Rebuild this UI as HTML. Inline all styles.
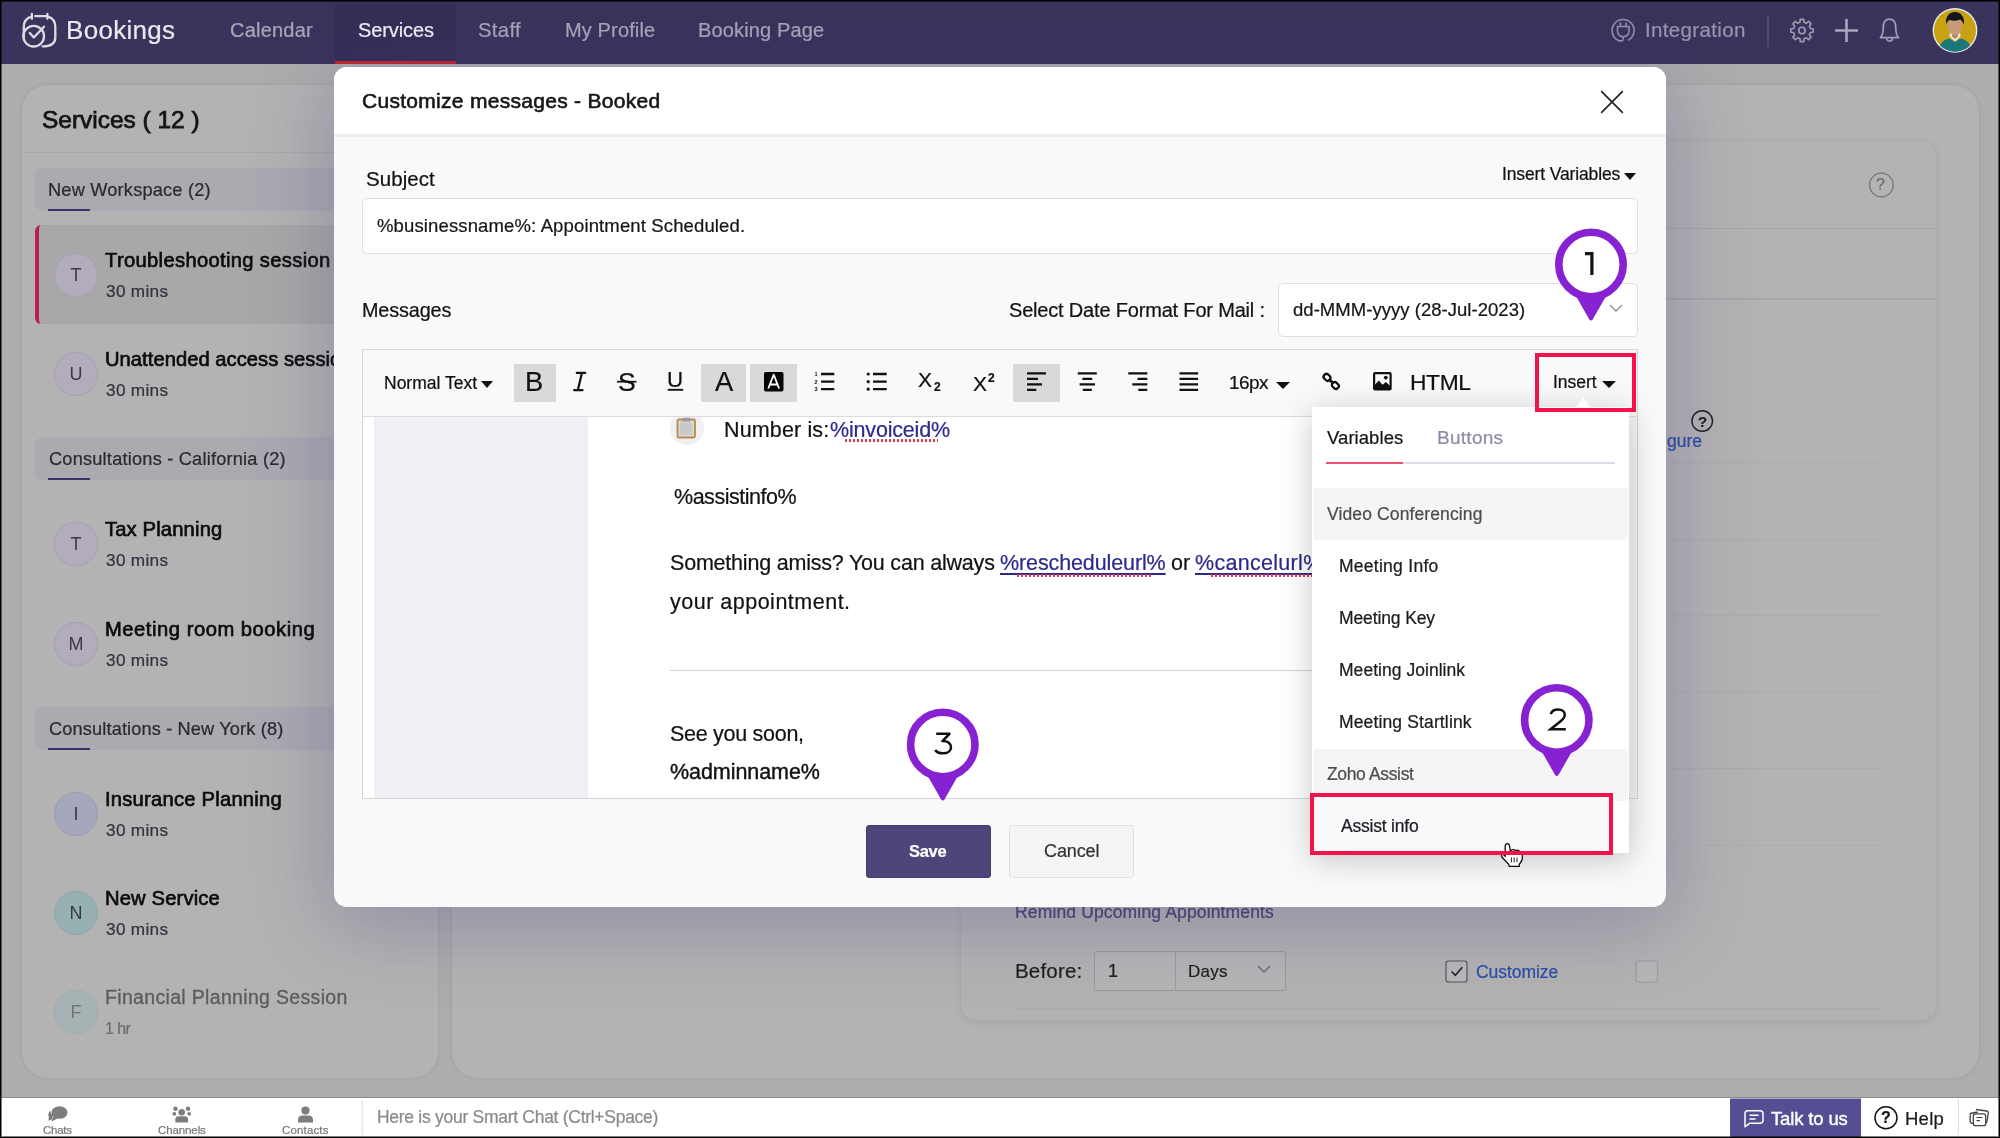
<!DOCTYPE html>
<html>
<head>
<meta charset="utf-8">
<title>Bookings</title>
<style>
*{box-sizing:border-box;margin:0;padding:0}
html,body{width:2000px;height:1138px;overflow:hidden}
body{font-family:"Liberation Sans",sans-serif;background:#adadad;position:relative;color:#111}
.abs{position:absolute}
.t{position:absolute;white-space:nowrap;line-height:1;will-change:transform;-webkit-text-stroke:0.22px}
/* header */
#hdr{position:absolute;left:0;top:0;width:2000px;height:63.500px;background:#3a335b}
#hdr .nav{color:#a9a6b8;font-size:20px}
#hdr .act{position:absolute;left:335px;top:0;width:121px;height:63.500px;background:#352e56;border-bottom:3.500px solid #c2262f}
/* page */
#side{position:absolute;left:22px;top:85px;width:416px;height:992.800px;background:#b3b3b3;border-radius:26px;box-shadow:0 0 4px rgba(0,0,0,.09)}
#main{position:absolute;left:451.500px;top:85px;width:1527px;height:992.800px;background:#b3b3b3;border-radius:26px;box-shadow:0 0 4px rgba(0,0,0,.09)}
#inner{position:absolute;left:960px;top:140px;width:976.500px;height:881px;background:#b3b3b3;border:1px solid #ababab;border-radius:16px;box-shadow:0 2px 6px rgba(0,0,0,.07)}
.grp{position:absolute;left:35px;width:420px;height:43px;background:#abaab1;border-radius:8px}
.grp i{position:absolute;left:13px;bottom:0;width:41.500px;height:1.600px;background:#38336a}
.gt{font-size:17.5px;color:#2a2a2e}
.av{will-change:transform;position:absolute;left:53.600px;width:44px;height:44px;border-radius:50%;background:#b3acbc;border:1px solid #a79fb3;text-align:center;line-height:42px;font-size:18px;color:#3a3a44}
.st{font-size:19.5px;letter-spacing:0.4px;font-weight:normal;-webkit-text-stroke:0.650px #0b0b0b;color:#0b0b0b}
.ss{font-size:16.5px;color:#30333f}

/* modal */
#modal{position:absolute;left:334px;top:67px;width:1332px;height:840px;background:#f8f9f9;border-radius:13px;box-shadow:0 14px 80px 6px rgba(72,52,125,.29)}
#mhead{position:absolute;left:0;top:0;width:1332px;height:70px;background:#fff;border-radius:13px 13px 0 0;border-bottom:3px solid #ededee}
.m20{font-size:20.5px;color:#121212}
.inp{position:absolute;background:#fff;border:1px solid #dedfe1;border-radius:5px}
#ed{position:absolute;left:362px;top:349px;width:1276px;height:450px;border:1px solid #d3d4d6;background:#fff}
#tb{position:absolute;left:0;top:0;width:1274px;height:67px;background:#f8f9f9;border-bottom:1px solid #dcdcde}
.hl{position:absolute;top:364px;height:38px;background:#d9d9d9}
.tbt{font-size:19px;color:#111}
.bd{font-size:21.5px;color:#121212}
.lk{color:#2b2a8c;text-decoration:underline;text-decoration-thickness:1.5px;text-underline-offset:3px}
.sq{position:absolute;height:3px;background-image:radial-gradient(circle,#e2344a 1.1px,transparent 1.4px);background-size:4px 3px}
#dd{position:absolute;left:1312px;top:407px;width:317px;height:446px;background:#fff;box-shadow:0 6px 30px rgba(0,0,0,.22)}
.ddh{position:absolute;left:2px;width:313.500px;height:52px;background:#f5f5f6}
.ddt{font-size:17.5px;color:#1b1b1f}
.ddg{font-size:17.5px;color:#4c4c50}
/* bottom bar */
#bot{position:absolute;left:0;top:1096.500px;width:2000px;height:42px;background:#fff;border-top:1.500px solid #8e8e8e}
/* frame */
#frame{position:absolute;left:0;top:0;width:2000px;height:1138px;border:1px solid #000;box-shadow:inset 0 0 0 1px rgba(0,0,0,.5);pointer-events:none;z-index:100}
</style>
</head>
<body>

<!-- ===== HEADER ===== -->
<div id="hdr">
  <div class="act"></div>
  <svg class="abs" style="left:0;top:0" width="2000" height="63" viewBox="0 0 2000 63" fill="none">
    <!-- logo -->
    <g stroke="#dcdae2" stroke-width="2.3" stroke-linecap="round" stroke-linejoin="round">
      <path d="M35.2 16.1H46.4M31.9 14v4.8M47.4 14v4.8"/>
      <path d="M31.6 16.6C26.3 18 23.8 21.5 23.8 27V37"/>
      <path d="M47.9 16.6C52.8 18 55.3 21.5 55.3 27V37.5C55.3 43.2 51 46.4 42.6 46.4"/>
      <circle cx="33.7" cy="36.2" r="10.3"/>
      <path d="M29.8 33l4 4.5L44 26.7"/>
    </g>
    <!-- integration -->
    <g stroke="#9591aa" stroke-width="1.6" stroke-linecap="round">
      <path d="M1628.6 40A11 11 0 1 0 1619 40.7"/>
      <path d="M1617.5 26.5h11.5v4.5a5.75 5.75 0 0 1-11.5 0zM1620.5 26v-3M1626 26v-3M1623.2 37v2.2c0 1.5-1.5 1.8-4 1.6"/>
    </g>
    <rect x="1767.3" y="15" width="1.4" height="32" fill="#5b5479"/>
    <!-- gear -->
    <g stroke="#9f9bb3" stroke-width="1.6" stroke-linejoin="round">
      <path d="M1810.36 28.49 L1813.16 28.73 L1813.16 32.27 L1810.36 32.51 L1809.33 34.99 L1811.14 37.14 L1808.64 39.64 L1806.49 37.83 L1804.01 38.86 L1803.77 41.66 L1800.23 41.66 L1799.99 38.86 L1797.51 37.83 L1795.36 39.64 L1792.86 37.14 L1794.67 34.99 L1793.64 32.51 L1790.84 32.27 L1790.84 28.73 L1793.64 28.49 L1794.67 26.01 L1792.86 23.86 L1795.36 21.36 L1797.51 23.17 L1799.99 22.14 L1800.23 19.34 L1803.77 19.34 L1804.01 22.14 L1806.49 23.17 L1808.64 21.36 L1811.14 23.86 L1809.33 26.01z"/>
      <circle cx="1802" cy="30.5" r="3.2"/>
    </g>
    <!-- plus -->
    <path d="M1835 30.5h23M1846.5 19v23" stroke="#aaa6bc" stroke-width="2.6"/>
    <!-- bell -->
    <g stroke="#a29eb6" stroke-width="1.7" stroke-linejoin="round">
      <path d="M1880.4 37.6c2.6-2.4 2.8-5 2.8-9.6 0-5.4 2.4-8.8 6.3-8.8s6.3 3.4 6.3 8.8c0 4.600 0.200 7.200 2.800 9.600z"/>
      <path d="M1886.600 38.200a2.900 2.900 0 0 0 5.800 0"/>
    </g>
    <!-- avatar -->
    <defs><clipPath id="avc"><circle cx="1955" cy="30.400" r="21.300"/></clipPath></defs>
    <circle cx="1955" cy="30.400" r="22.400" fill="#e9e6f2"/>
    <circle cx="1955" cy="30.400" r="21" fill="#c7a312"/>
    <g clip-path="url(#avc)">
      <path d="M1938.500 53c0-9 5-13.500 11-14.500l5.500 3.500 5.500-3.500c6 1 11 5.500 11 14.500z" fill="#1c777d"/>
      <path d="M1949.500 36.500l5.500 5 5.500-5v-3h-11z" fill="#e8e8e8"/>
      <path d="M1952 31h6v5.500l-3 2.500-3-2.500z" fill="#b88a64"/>
      <ellipse cx="1955" cy="26" rx="7.400" ry="9" fill="#c79c78"/>
      <path d="M1946.300 24.500c-1.500-7 2.500-12.500 8.700-12.500s10.200 5.500 8.700 12.500c-1-2.500-2.200-4-3.700-5-3 1.500-7 1.500-10.500 0.500-1.700 1-2.700 2.500-3.200 4.500z" fill="#15151a"/>
    </g>
  </svg>
  <div class="t" style="letter-spacing:0.292px;;;;;;;left:66.00px;top:17px;font-size:26px;color:#e9e7ef">Bookings</div>
  <div class="t nav" style="letter-spacing:0.214px;;;;;;;left:230.00px;top:20px">Calendar</div>
  <div class="t nav" style="letter-spacing:-0.098px;;;;;;;left:358.00px;top:20px;color:#f2f0f6">Services</div>
  <div class="t nav" style="letter-spacing:0.323px;;;;;;;font-size:20.3px;left:478.00px;top:19.75px">Staff</div>
  <div class="t nav" style="letter-spacing:0.135px;;;;;;;left:565.00px;top:20px">My Profile</div>
  <div class="t nav" style="letter-spacing:0.144px;;;;;;;left:698.00px;top:20px">Booking Page</div>
  <div class="t" style="letter-spacing:0.353px;;;;;;;left:1644.50px;top:20px;font-size:20.5px;color:#9995ad">Integration</div>
</div>

<!-- ===== PAGE BEHIND ===== -->
<div id="side"></div>
<div class="t" style="letter-spacing:-0.020px;;;;;;;left:41.50px;top:108.32px;font-size:24.5px;font-weight:normal;-webkit-text-stroke:0.750px #141414;color:#141414">Services ( 12 )</div>
<div class="abs" style="left:22px;top:152px;width:416px;height:1px;background:#a9a9a9"></div>

<div class="grp" style="top:168px"><i></i></div>
<div class="t gt" style="letter-spacing:0.200px;;;;;;;font-size:18.2px;left:47.50px;top:181.21px">New Workspace (2)</div>
<div class="abs" style="left:35px;top:225px;width:420px;height:99px;background:#a8a8a8;border-left:4.500px solid #b5244f;border-radius:6px 0 0 6px"></div>
<div class="av" style="top:253.20px">T</div>
<div class="t st" style="letter-spacing:0.325px;;;font-size:20.2px;;;;left:105.00px;top:250.01px">Troubleshooting session</div>
<div class="t ss" style="letter-spacing:0.319px;;;;;;;font-size:17.2px;left:105.50px;top:282.51px">30 mins</div>
<div class="av" style="top:352.20px">U</div>
<div class="t st" style="letter-spacing:0.03px;font-size:20.2px;left:104.5px;top:349.01px">Unattended access session</div>
<div class="t ss" style="letter-spacing:0.319px;;;;;;;font-size:17.2px;left:105.50px;top:381.51px">30 mins</div>

<div class="grp" style="top:437px"><i></i></div>
<div class="t gt" style="letter-spacing:0.210px;;;;;;;font-size:18.2px;left:48.50px;top:450.21px">Consultations - California (2)</div>
<div class="av" style="top:522.20px">T</div>
<div class="t st" style="letter-spacing:0.149px;;;font-size:20.2px;;;;left:105.00px;top:519.01px">Tax Planning</div>
<div class="t ss" style="letter-spacing:0.319px;;;;;;;font-size:17.2px;left:105.50px;top:551.51px">30 mins</div>
<div class="av" style="top:622.20px">M</div>
<div class="t st" style="letter-spacing:0.525px;;;font-size:20.2px;;;;left:104.50px;top:619.01px">Meeting room booking</div>
<div class="t ss" style="letter-spacing:0.319px;;;;;;;font-size:17.2px;left:105.50px;top:651.51px">30 mins</div>

<div class="grp" style="top:707px"><i></i></div>
<div class="t gt" style="letter-spacing:0.139px;;;;;;;font-size:18.2px;left:48.50px;top:720.21px">Consultations - New York (8)</div>
<div class="av" style="top:792.20px;background:#a5a7bc;border-color:#9899b1">I</div>
<div class="t st" style="letter-spacing:0.229px;;;font-size:20.2px;;;;left:104.50px;top:789.01px">Insurance Planning</div>
<div class="t ss" style="letter-spacing:0.319px;;;;;;;font-size:17.2px;left:105.50px;top:821.51px">30 mins</div>
<div class="av" style="top:891.20px;background:#97b0b2;border-color:#8aa6a9">N</div>
<div class="t st" style="letter-spacing:0.142px;;;font-size:20.2px;;;;left:104.50px;top:888.01px">New Service</div>
<div class="t ss" style="letter-spacing:0.319px;;;;;;;font-size:17.2px;left:105.50px;top:920.51px">30 mins</div>
<div class="av" style="top:990.20px;background:#a6b2b4;border-color:#9eadb0;color:#6f757b">F</div>
<div class="t st" style="letter-spacing:0.328px;;;;;;;left:104.50px;top:987.60px;font-weight:normal;color:#5c5c60;-webkit-text-stroke:0.300px #5c5c60">Financial Planning Session</div>
<div class="t ss" style="letter-spacing:-0.581px;;;;;;;font-size:16px;left:104.50px;top:1020.52px;color:#696b70">1 hr</div>
<div id="main"></div>
<div id="inner"></div>
<!-- behind-modal right content -->
<svg class="abs" style="left:0;top:0" width="2000" height="1138" viewBox="0 0 2000 1138" fill="none">
  <path d="M961 228.500H1936" stroke="#a7a7a9" stroke-width="1"/>
  <path d="M961 298.800H1936" stroke="#9f9fa3" stroke-width="1.200"/>
  <path d="M1015 462.500H1880M1015 539.500H1880M1015 615.800H1880M1015 692H1880M1015 768.500H1880M1015 845H1880M1015 1008.800H1880" stroke="#acacae" stroke-width="1"/>
  <circle cx="1881.400" cy="185" r="11.800" stroke="#757578" stroke-width="1.300"/>
  <circle cx="1702.200" cy="421" r="10.300" stroke="#1d1d22" stroke-width="1.400"/>
  <!-- checkbox -->
  <rect x="1446" y="961" width="21" height="21" rx="2.500" stroke="#55565c" stroke-width="1.200" fill="#b9b9b9"/>
  <path d="M1451.500 971.500l3.800 3.800 7-8" stroke="#222" stroke-width="1.600"/>
  <rect x="1636" y="961" width="21.500" height="21" rx="2.500" stroke="#9c9ca0" stroke-width="1.200" fill="#b7b7b7"/>
</svg>
<div class="t" style="left:1876.400px;top:176.500px;font-size:16px;color:#6f6f73">?</div>
<div class="t" style="left:1697.700px;top:413.500px;font-size:15px;font-weight:bold;color:#1d1d22">?</div>
<div class="t" style="left:1667.300px;top:433px;font-size:17.500px;color:#2a4ea6">gure</div>
<div class="t" id="rm" style="letter-spacing:0.146px;;;;;;;left:1014.50px;top:903.50px;font-size:17.500px;color:#48446f">Remind Upcoming Appointments</div>
<div class="t" id="bf" style="letter-spacing:0.184px;;;;;;;left:1014.50px;top:960.58px;font-size:20.5px;color:#1e1e1e">Before:</div>
<div class="abs" style="left:1093.500px;top:951px;width:192px;height:40px;background:#b5b5b5;border:1px solid #9b9b9e;border-radius:3px"></div>
<div class="abs" style="left:1175px;top:951px;width:1px;height:40px;background:#9b9b9e"></div>
<div class="t" style="left:1108px;top:962px;font-size:18px;color:#1e1e1e">1</div>
<div class="t" id="dy" style="letter-spacing:0.256px;;;;;;;left:1188.00px;top:963.42px;font-size:17px;color:#1e1e1e">Days</div>
<svg class="abs" style="left:1255px;top:963px" width="18" height="12" viewBox="0 0 18 12"><path d="M3 3l6 6 6-6" stroke="#6a6a70" stroke-width="1.300" fill="none"/></svg>
<div class="t" id="cz" style="letter-spacing:-0.054px;;;;;;;left:1475.50px;top:963.92px;font-size:17.5px;color:#2a4ea6">Customize</div>


<!-- ===== MODAL ===== -->
<div id="modal"><div id="mhead"></div></div>
<div class="t" style="letter-spacing:0.290px;;;;;;;left:361.50px;top:90.43px;font-size:21px;font-weight:normal;-webkit-text-stroke:0.600px #161616;color:#161616">Customize messages - Booked</div>
<svg class="abs" style="left:1599px;top:88.500px" width="26" height="26" viewBox="0 0 26 26"><path d="M2.200 2.200l21.600 21.600M23.800 2.200l-21.600 21.600" stroke="#222" stroke-width="1.700" fill="none"/></svg>

<div class="t m20" style="letter-spacing:0.053px;;;;;;;left:366.00px;top:168.50px">Subject</div>
<div class="t" style="letter-spacing:-0.136px;;;;;;;left:1501.50px;top:166.00px;font-size:17.5px;color:#111">Insert Variables</div>
<div class="abs" style="left:1624px;top:173px;border-left:6.500px solid transparent;border-right:6.500px solid transparent;border-top:7px solid #111"></div>
<div class="inp" style="left:362px;top:197.500px;width:1276px;height:56px"></div>
<div class="t" style="letter-spacing:0.137px;;;;;;;left:377.00px;top:217.20px;font-size:18.500px;color:#161616">%businessname%: Appointment Scheduled.</div>

<div class="t m20" style="letter-spacing:-0.109px;;;;;;;font-size:19.8px;left:361.50px;top:300.59px">Messages</div>
<div class="t m20" style="letter-spacing:-0.183px;;;;;;;font-size:20px;left:1008.50px;top:299.92px">Select Date Format For Mail :</div>
<div class="inp" style="left:1278px;top:282.500px;width:360px;height:54.500px"></div>
<div class="t" style="letter-spacing:0.036px;;;;;;;left:1293.00px;top:301.00px;font-size:18.500px;color:#161616">dd-MMM-yyyy (28-Jul-2023)</div>
<svg class="abs" style="left:1608px;top:303px" width="16" height="10" viewBox="0 0 16 10"><path d="M2 2l6 6 6-6" stroke="#8c8c90" stroke-width="1.300" fill="none"/></svg>

<div id="ed"><div id="tb"></div>
  <div class="abs" style="left:11px;top:67px;width:214px;height:381px;background:#f0eff3"></div>
  <div class="abs" style="left:1265px;top:67px;width:9px;height:381px;background:#f6f6f7;border-left:1px solid #e9e9eb"></div>
</div>

<!-- toolbar -->
<div class="hl" style="left:513.500px;width:42.500px"></div>
<div class="hl" style="left:701px;width:45px"></div>
<div class="hl" style="left:750px;width:47px"></div>
<div class="hl" style="left:1013px;width:47px"></div>
<div class="t" id="tNT" style="letter-spacing:0.001px;;;;;;;left:383.50px;top:375.30px;font-size:17.500px;color:#111">Normal Text</div>
<div class="abs" style="left:481px;top:381px;border-left:6.500px solid transparent;border-right:6.500px solid transparent;border-top:7px solid #111"></div>
<div class="t" id="tB" style="left:524.700px;top:368.100px;font-size:27.300px;color:#111">B</div>
<div class="t" id="tS" style="left:617.800px;top:368.500px;font-size:26.500px;color:#111">S</div>
<div class="t" id="tU" style="left:667.200px;top:368.600px;font-size:22.300px;color:#111">U</div>
<div class="t" id="tA" style="left:715.200px;top:368.200px;font-size:27.300px;color:#111">A</div>
<div class="t" id="tX1" style="left:918px;top:369px;font-size:21px;color:#111">X</div>
<div class="t" id="t21" style="left:934px;top:381px;font-size:12px;color:#111;font-weight:bold">2</div>
<div class="t" id="tX2" style="left:973px;top:372.500px;font-size:21px;color:#111">X</div>
<div class="t" id="t22" style="left:988px;top:371.500px;font-size:12px;color:#111;font-weight:bold">2</div>
<div class="t" id="t16" style="letter-spacing:-0.567px;;;;;;;left:1229.00px;top:372.85px;font-size:19px;color:#111">16px</div>
<div class="abs" style="left:1275.500px;top:382px;border-left:7px solid transparent;border-right:7px solid transparent;border-top:7.500px solid #111"></div>
<div class="t" id="tH" style="letter-spacing:-0.359px;;;;;;;left:1409.70px;top:371.24px;font-size:22.8px;color:#111">HTML</div>
<div class="t" id="tIns" style="letter-spacing:-0.041px;;;;;;;left:1553.30px;top:374.00px;font-size:17.500px;color:#111">Insert</div>
<div class="abs" style="left:1602px;top:380.500px;border-left:7px solid transparent;border-right:7px solid transparent;border-top:7px solid #111"></div>
<svg class="abs" style="left:560px;top:360px" width="1000" height="44" viewBox="560 360 1000 44" fill="none" stroke="#111" stroke-width="2.300">
  <!-- italic I -->
  <path d="M581.900 372.900L577.800 390.200M576.800 372.900h8.400M574.200 390.200h8.300" stroke-width="2.200" stroke-linecap="round"/>
  <!-- strike -->
  <path d="M617 381.700h19.500" stroke-width="1.700"/>
  <!-- underline -->
  <path d="M667.800 389.800h15.400" stroke-width="1.900"/>
  <!-- inverse A -->
  <rect x="764" y="372" width="19.500" height="19.500" rx="1.800" fill="#050505" stroke="none"/>
  <path d="M768.300 388.500l5.400-13.800 5.400 13.800M770 384.500h7.400" stroke="#fff" stroke-width="1.800" stroke-linejoin="round"/>
  <!-- ol -->
  <path d="M821 374h13.300M821 381.700h13.300M821 389.200h13.300"/>
  <g stroke="none" fill="#111" font-family="Liberation Sans, sans-serif" font-size="5.500" font-weight="bold"><text x="814.500" y="376">1</text><text x="814.500" y="383.700">2</text><text x="814.500" y="391.200">3</text></g>
  <!-- ul -->
  <path d="M873 374h13.700M873 381.700h13.700M873 389.200h13.700"/>
  <g stroke="none" fill="#111"><circle cx="868.200" cy="374" r="1.600"/><circle cx="868.200" cy="381.700" r="1.600"/><circle cx="868.200" cy="389.200" r="1.600"/></g>
  <!-- align left -->
  <path d="M1027 373.300h19M1027 378.800h11M1027 384.300h15M1027 389.800h9.300"/>
  <!-- align center -->
  <path d="M1077.800 373.300h19M1082.400 378.800h9.800M1079.600 384.300h15.400M1082.800 389.800h9"/>
  <!-- align right -->
  <path d="M1128.300 373.300h19M1137.500 378.800h9.800M1132.300 384.300h15M1138.300 389.800h9"/>
  <!-- justify -->
  <path d="M1179.500 373.300h18.600M1179.500 378.800h18.600M1179.500 384.300h18.600M1179.500 389.800h18.600"/>
  <!-- link -->
  <g stroke-width="2.300" transform="translate(1331.200 381.400) rotate(44.500)">
    <rect x="-9.300" y="-2.750" width="6.900" height="5.500" rx="2.100"/>
    <rect x="2.400" y="-2.750" width="6.900" height="5.500" rx="2.100"/>
    <path d="M-3 0H3" stroke-width="3"/>
  </g>
  <!-- image -->
  <rect x="1374.100" y="373.100" width="16.500" height="16.300" rx="1" stroke-width="2.200"/>
  <path d="M1374.300 390V385.500L1378.700 380.400L1382.600 384.800L1385.800 382.100L1390.400 386.300V390z" fill="#111" stroke="none"/>
  <circle cx="1385.800" cy="377.600" r="1.900" fill="#111" stroke="none"/>
</svg>

<!-- editor body -->
<div class="abs" style="left:669.500px;top:417px;width:34px;height:28px;overflow:hidden"><div class="abs" style="left:0;top:-6.500px;width:34px;height:34px;border-radius:50%;background:#f0eff4"></div></div>
<svg class="abs" style="left:676px;top:417px" width="21" height="22" viewBox="0 0 21 22"><rect x="1.500" y="2.500" width="17.500" height="18" rx="1.500" fill="#d9d9d6" stroke="#b98a4e" stroke-width="1.800"/><rect x="4" y="5.500" width="12.500" height="12.500" fill="#c9c9c9"/><rect x="6" y="0.800" width="8.500" height="3.600" rx="1" fill="#9a9a9a"/></svg>
<div class="t bd" id="b1" style="letter-spacing:0.137px;;;;;;left:724.40px;top:419.500px">Number is:</div>
<div class="t bd" id="b1b" style="letter-spacing:-0.178px;;;;;;left:830.20px;top:419.500px;color:#2d2a8f">%invoiceid%</div>
<div class="sq" style="left:844px;top:439px;width:94px"></div>
<div class="t bd" id="b2" style="letter-spacing:-0.476px;;;;;;;left:674.30px;top:486.50px">%assistinfo%</div>
<div class="t bd" id="b3" style="letter-spacing:-0.206px;;;;;;left:669.90px;top:553px">Something amiss? You can always</div>
<div class="t bd lk" id="b3a" style="letter-spacing:-0.114px;;;;;;left:1000.00px;top:553px">%rescheduleurl%</div>
<div class="t bd" id="b3o" style="letter-spacing:-0.057px;;;;;;left:1170.80px;top:553px">or</div>
<div class="abs" style="left:1190px;top:540px;width:122px;height:44px;overflow:hidden"><div class="t bd lk" id="b3b" style="left:4.500px;top:13px;letter-spacing:0.300px">%cancelurl% fo</div></div>
<div class="sq" style="left:1016px;top:574px;width:136px"></div>
<div class="sq" style="left:1210px;top:574px;width:102px"></div>
<div class="t bd" id="b4" style="letter-spacing:0.498px;;;;;;;left:669.90px;top:592.00px">your appointment.</div>
<div class="abs" style="left:669.500px;top:669.500px;width:643px;height:1.500px;background:#d2d2d4"></div>
<div class="t bd" id="b5" style="letter-spacing:-0.282px;;;;;;;left:669.90px;top:724.00px">See you soon,</div>
<div class="t bd" id="b6" style="letter-spacing:-0.066px;;;;;;;left:669.90px;top:762.00px;-webkit-text-stroke:0.400px #111">%adminname%</div>

<!-- buttons -->
<div class="abs" style="left:866px;top:825px;width:125px;height:52.500px;background:#4e467b;border-radius:3px;border:1px solid #443c72"></div>
<div class="t" id="bS" style="letter-spacing:-0.286px;;;;;;;left:909.40px;top:843.35px;font-size:16.5px;font-weight:bold;color:#fff">Save</div>
<div class="abs" style="left:1009px;top:825px;width:125px;height:52.500px;background:#f5f5f5;border-radius:3px;border:1px solid #e1e1e3"></div>
<div class="t" id="bC" style="letter-spacing:-0.106px;;;;;;;left:1044.40px;top:842px;font-size:18px;color:#333">Cancel</div>

<!-- dropdown -->
<div id="dd">
  <div class="ddh" style="top:81px"></div>
  <div class="ddh" style="top:341.500px"></div>
  <div class="abs" style="left:0;top:391px;width:301px;height:56px;background:#f8f9fa"></div>
  <div class="abs" style="left:14px;top:55.200px;width:288.500px;height:1.600px;background:#dddce8"></div>
  <div class="abs" style="left:14px;top:55.200px;width:76.500px;height:1.600px;background:#f0506f"></div>
</div>
<div class="abs" style="left:1576px;top:397px;border-left:7.500px solid transparent;border-right:7.500px solid transparent;border-bottom:10px solid #fbfcfc"></div>
<div class="t" id="d0" style="letter-spacing:0.062px;;;;;;;left:1326.50px;top:429px;font-size:18.500px;color:#15151a">Variables</div>
<div class="t" id="d0b" style="letter-spacing:0.278px;;;;;;;left:1436.90px;top:427.78px;font-size:19px;color:#8d8ba6">Buttons</div>
<div class="t ddg" id="d1" style="letter-spacing:0.120px;;;;;;;left:1326.50px;top:505.500px">Video Conferencing</div>
<div class="t ddt" id="d2" style="letter-spacing:0.266px;;;;;;;left:1339.20px;top:557.500px">Meeting Info</div>
<div class="t ddt" id="d3" style="letter-spacing:-0.123px;;;;;;;left:1339.20px;top:609.500px">Meeting Key</div>
<div class="t ddt" id="d4" style="letter-spacing:0.038px;;;;;;;left:1339.20px;top:661.500px">Meeting Joinlink</div>
<div class="t ddt" id="d5" style="letter-spacing:0.138px;;;;;;;left:1339.20px;top:713.500px">Meeting Startlink</div>
<div class="t ddg" id="d6" style="letter-spacing:-0.356px;;;;;;;left:1326.50px;top:765.500px">Zoho Assist</div>
<div class="t ddt" id="d7" style="letter-spacing:-0.202px;;;;;;;left:1340.60px;top:817.500px">Assist info</div>

<!-- cursor (under red box) -->
<svg class="abs" style="left:1495px;top:838px" width="34" height="34" viewBox="1495 838 34 34">
  <path d="M1505.200 856.500V846.600C1505.200 842.700 1509.400 842.700 1509.600 846.600L1510.300 850.800C1512.500 849.300 1514.500 849.600 1515.800 850.600C1517.500 849.900 1519 850.500 1519.800 851.500C1521.600 851.600 1522.300 853 1522.300 855V858.500C1522.300 861 1520.500 862.500 1519.300 864.300V866.300H1509.200L1508.700 864.300L1503.200 858.500C1501.500 856.800 1501 855.500 1501.800 854.800C1502.800 854 1504 854.600 1505.200 856.500z" fill="#fff" stroke="#0d0d0d" stroke-width="1.300" stroke-linejoin="round"/>
  <path d="M1511.400 857.500v4.800M1514.200 857.500v4.800M1517 857.500v4.800" stroke="#222" stroke-width="1" fill="none"/>
</svg>
<!-- red highlight boxes -->
<div class="abs" style="left:1535px;top:353px;width:100.500px;height:58.700px;border:4px solid #f2124c"></div>
<div class="abs" style="left:1310px;top:793px;width:303px;height:62px;border:4px solid #f2124c"></div>

<!-- pins -->
<svg class="abs" style="left:0;top:0;pointer-events:none" width="2000" height="1138" viewBox="0 0 2000 1138">
  <defs>
    <g id="pin">
      <path d="M-14.500 32.500L-1.800 54.800Q0 57.300 1.800 54.800L14.500 32.500z" fill="#8722d3"/>
      <circle cx="0" cy="0" r="32.200" fill="#fff" stroke="#8722d3" stroke-width="7.600"/>
    </g>
  </defs>
  <g transform="translate(1591 264.500)"><use href="#pin"/><path d="M-6 -10.900H0.900V10.400" fill="none" stroke="#111" stroke-width="3.200"/></g>
  <g transform="translate(1556.800 720)"><use href="#pin"/><path vector-effect="non-scaling-stroke" transform="translate(1 -0.500) scale(1 0.880)" d="M-7 -6.200C-6 -9.600 -3.200 -11.300 0.200 -11.300C4.300 -11.300 7 -8.800 7 -5.400C7 -2.600 5.600 -0.600 2.800 2L-7.300 11.200H8" fill="none" stroke="#111" stroke-width="2.500"/></g>
  <g transform="translate(942.800 744.500)"><use href="#pin"/><path vector-effect="non-scaling-stroke" transform="translate(0.400 -1) scale(1 0.863)" d="M-7 -11.200H6.300L-0.800 -2.800C4.800 -3 7.800 0 7.800 4.300C7.800 8.800 4.200 11.400 -0.200 11.400C-3.800 11.400 -6.600 10 -8 7.500" fill="none" stroke="#111" stroke-width="2.500" stroke-linejoin="round"/></g>
</svg>

<!-- ===== BOTTOM BAR ===== -->
<div id="bot"></div>
<svg class="abs" style="left:0;top:1098px" width="2000" height="40" viewBox="0 1098 2000 40" fill="none">
  <!-- chats -->
  <g fill="#7d7d7d">
    <ellipse cx="59.500" cy="1112.500" rx="8" ry="6.300"/>
    <path d="M53 1116.500l-1.500 5 6-3z"/>
    <path d="M50.500 1110.500c-2.300 1.700-2.800 4.500-1.500 6.800l-0.800 3.500 3.500-1.300 1.500-4.500c-2-1-2.900-2.500-2.700-4.500z"/>
    <!-- channels -->
    <circle cx="181.700" cy="1112.200" r="3.300"/>
    <path d="M175.300 1122.500v-3c0-2 1.500-3.200 3.200-3.200h6.400c1.700 0 3.200 1.200 3.200 3.200v3z"/>
    <circle cx="175.500" cy="1108.800" r="2.200"/><circle cx="188" cy="1108.800" r="2.200"/>
    <circle cx="174.300" cy="1113.800" r="1.900"/><circle cx="189.200" cy="1113.800" r="1.900"/>
    <!-- contacts -->
    <circle cx="305.500" cy="1110.600" r="4.100"/>
    <path d="M298 1122.500v-3c0-2.500 2-4 4-4h7c2 0 4 1.500 4 4v3z"/>
  </g>
  <rect x="361.500" y="1101" width="1.500" height="34" fill="#e6e6e6"/>
  <!-- talk to us -->
  <rect x="1730" y="1098.500" width="131" height="40" fill="#534f92"/>
  <path d="M1747.500 1110.800h12.500c2 0 3 1 3 3v6.500c0 2-1 3-3 3h-10.500l-4.500 3.500v-13c0-2 0.500-3 2.500-3z" stroke="#fff" stroke-width="1.500" stroke-linejoin="round"/>
  <path d="M1749.500 1115.300h9M1749.500 1119h6" stroke="#fff" stroke-width="1.400"/>
  <circle cx="1886" cy="1117.700" r="11" stroke="#111" stroke-width="1.500"/>
  <rect x="1957.800" y="1099" width="1" height="36" fill="#d9d9d9"/>
  <!-- stack -->
  <g stroke="#444" stroke-width="1.300" stroke-linejoin="round" fill="#fff">
    <path d="M1970.300 1113.500l12-2.500c1.500-0.300 2.500 0.500 2.500 2l-1 8c-0.200 1.500-1 2.300-2.500 2.300h-9c-1.300 0-2-0.800-2.200-2z"/>
    <path d="M1976 1109.500l10.500 1.500c1.300 0.200 2 1 1.800 2.300l-1.300 8c-0.200 1.300-1 2-2.300 2"/>
    <rect x="1973.300" y="1113.800" width="12.400" height="11.800" rx="2.200"/>
    <path d="M1976.500 1117.500h6M1976.500 1120.700h3.500" stroke-width="1.200"/>
  </g>
</svg>
<div class="t" id="c1" style="letter-spacing:-0.273px;;;;;;;left:43.40px;top:1124.70px;font-size:11.500px;color:#777">Chats</div>
<div class="t" id="c2" style="letter-spacing:-0.106px;;;;;;;left:157.50px;top:1124.70px;font-size:11.500px;color:#777">Channels</div>
<div class="t" id="c3" style="letter-spacing:0.153px;;;;;;;left:282.00px;top:1124.70px;font-size:11.500px;color:#777">Contacts</div>
<div class="t" id="sc" style="letter-spacing:-0.284px;;;;;;;left:376.50px;top:1109.20px;font-size:17.500px;color:#8a8a8a">Here is your Smart Chat (Ctrl+Space)</div>
<div class="t" id="tk" style="letter-spacing:-0.144px;;;;;;;left:1770.80px;top:1109.82px;font-size:18.5px;color:#fff;-webkit-text-stroke:0.400px #fff">Talk to us</div>
<div class="t" style="left:1881.300px;top:1109.500px;font-size:16px;color:#111;font-weight:bold">?</div>
<div class="t" id="hp" style="letter-spacing:0.247px;;;;;;;left:1904.50px;top:1109.67px;font-size:18.5px;color:#1a1a1a">Help</div>

<div id="frame"></div>
</body>
</html>
